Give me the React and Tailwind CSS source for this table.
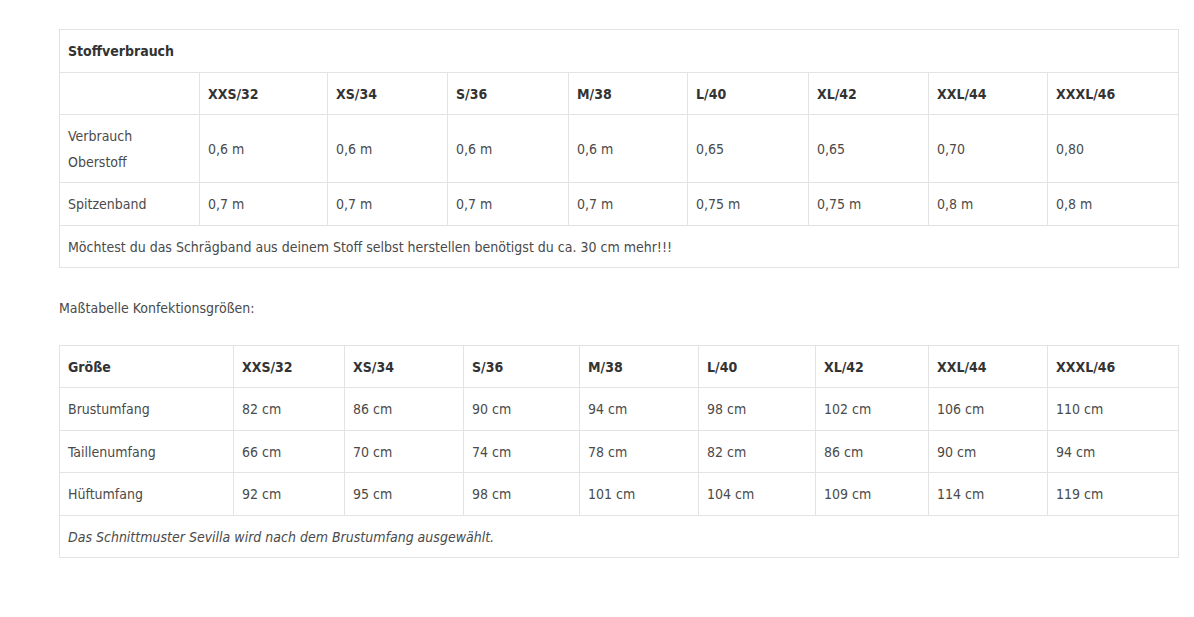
import React from 'react';

const sizes = ['XXS/32', 'XS/34', 'S/36', 'M/38', 'L/40', 'XL/42', 'XXL/44', 'XXXL/46'];

const fabricCols = [140, 128, 120, 121, 119, 121, 120, 119, 131];
const measureCols = [174, 111, 119, 116, 119, 117, 113, 119, 131];

const fabricRows = [
    { label: ['Verbrauch', 'Oberstoff'], values: ['0,6 m', '0,6 m', '0,6 m', '0,6 m', '0,65', '0,65', '0,70', '0,80'], h: 'h-[68px]' },
    { label: ['Spitzenband'], values: ['0,7 m', '0,7 m', '0,7 m', '0,7 m', '0,75 m', '0,75 m', '0,8 m', '0,8 m'], h: 'h-[43px]' },
];

const measureRows = [
    { label: 'Brustumfang', values: ['82 cm', '86 cm', '90 cm', '94 cm', '98 cm', '102 cm', '106 cm', '110 cm'], h: 'h-[43px]' },
    { label: 'Taillenumfang', values: ['66 cm', '70 cm', '74 cm', '78 cm', '82 cm', '86 cm', '90 cm', '94 cm'], h: 'h-[42px]' },
    { label: 'Hüftumfang', values: ['92 cm', '95 cm', '98 cm', '101 cm', '104 cm', '109 cm', '114 cm', '119 cm'], h: 'h-[43px]' },
];

const cell = 'border border-[#e3e3e3] px-2 align-middle';
const head = `${cell} font-bold text-[#333]`;

const Cols = ({ widths }) => (
    <colgroup>
        {widths.map((w, i) => (
            <col key={i} style={{ width: w }} />
        ))}
    </colgroup>
);

const App = () => {
    return (
        <div className="min-h-[617px] bg-white text-[#4a4a4a] text-[14px] leading-[26px] font-['DejaVu_Sans_Condensed',Roboto,sans-serif]">
            <div className="pl-[59px] pt-[29px] w-[1179px]">
                {/* Stoffverbrauch */}
                <table className="w-[1120px] table-fixed border-collapse">
                    <Cols widths={fabricCols} />
                    <tbody>
                        <tr className="h-[43px]">
                            <td colSpan={9} className={head}>Stoffverbrauch</td>
                        </tr>
                        <tr className="h-[42px]">
                            <td className={cell}></td>
                            {sizes.map((s) => (
                                <td key={s} className={head}>{s}</td>
                            ))}
                        </tr>
                        {fabricRows.map((row) => (
                            <tr key={row.label[0]} className={row.h}>
                                <td className={cell}>
                                    {row.label.map((l) => (
                                        <div key={l}>{l}</div>
                                    ))}
                                </td>
                                {row.values.map((v, i) => (
                                    <td key={i} className={cell}>{v}</td>
                                ))}
                            </tr>
                        ))}
                        <tr className="h-[42px]">
                            <td colSpan={9} className={cell}>
                                Möchtest du das Schrägband aus deinem Stoff selbst herstellen benötigst du ca. 30 cm mehr!!!
                            </td>
                        </tr>
                    </tbody>
                </table>

                <p className="mt-[27px] mb-[24px]">Maßtabelle Konfektionsgrößen:</p>

                {/* Maßtabelle */}
                <table className="w-[1120px] table-fixed border-collapse">
                    <Cols widths={measureCols} />
                    <tbody>
                        <tr className="h-[42px]">
                            <td className={head}>Größe</td>
                            {sizes.map((s) => (
                                <td key={s} className={head}>{s}</td>
                            ))}
                        </tr>
                        {measureRows.map((row) => (
                            <tr key={row.label} className={row.h}>
                                <td className={cell}>{row.label}</td>
                                {row.values.map((v, i) => (
                                    <td key={i} className={cell}>{v}</td>
                                ))}
                            </tr>
                        ))}
                        <tr className="h-[42px]">
                            <td colSpan={9} className={`${cell} italic`}>
                                Das Schnittmuster Sevilla wird nach dem Brustumfang ausgewählt.
                            </td>
                        </tr>
                    </tbody>
                </table>
            </div>
        </div>
    );
};

export default App;
